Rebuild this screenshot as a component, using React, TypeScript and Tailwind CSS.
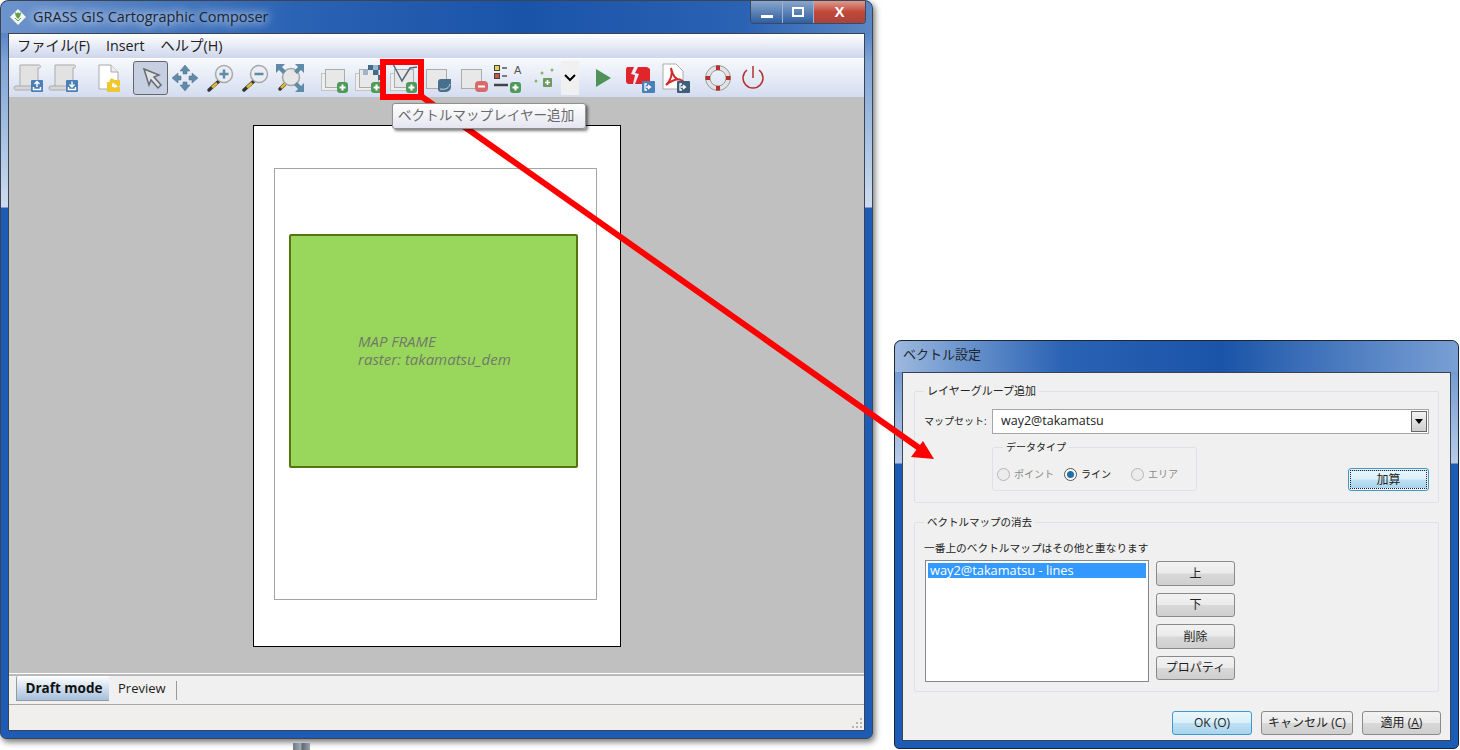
import React from 'react';

const jp = '[font-family:"Open_Sans","Noto_Sans_CJK_JP",sans-serif]';

const AddBadge = ({ x = 19, y = 20 }: { x?: number; y?: number }) => (
  <g>
    <rect x={x} y={y} width="11" height="11" rx="3" fill="#4f9a5b" />
    <path d={`M${x + 5.5} ${y + 2.5}v6M${x + 2.5} ${y + 5.5}h6`} stroke="#fff" strokeWidth="2" />
  </g>
);

const Layers = () => (
  <g>
    <rect x="3.5" y="11.5" width="19" height="17" fill="#eee" stroke="#c4c4c4" />
    <rect x="7.5" y="7.5" width="19" height="18" fill="#e8e8e8" stroke="#ababab" />
  </g>
);

const Scroll = ({ down }: { down?: boolean }) => (
  <svg viewBox="0 0 32 32" className="h-8 w-8">
    <path d="M7 3h19c2 0 2 3 0 3h-1v21H7z" fill="#e2e2e2" stroke="#ababab" />
    <path d="M1 26c0-2 2-2 3-2h15v4H3c-1 0-2-1-2-2z" fill="#d6d6d6" stroke="#ababab" />
    <rect x="18" y="18" width="12" height="12" rx="1" fill="#4b7fb8" />
    {down ? (
      <path d="M24 19.500v5M21.500 22.500l2.500 2.500 2.500-2.500M20.500 25v2.500h7V25" stroke="#fff" strokeWidth="1.400" fill="none" />
    ) : (
      <path d="M24 25v-5M21.500 22l2.500-2.500 2.500 2.500M20.500 25v2.500h7V25" stroke="#fff" strokeWidth="1.400" fill="none" />
    )}
  </svg>
);

const NewPage = () => (
  <svg viewBox="0 0 32 32" className="h-8 w-8">
    <path d="M6 3h12l7 7v17H6z" fill="#fff" stroke="#aaa" />
    <path d="M18 3v7h7" fill="#eee" stroke="#aaa" />
    <path d="M14 20h5v5h-5zM21 18h6v6h-6zM19 25h8v5H14v-5z" fill="#edc92f" />
    <circle cx="19" cy="19" r="2.500" fill="#edc92f" />
    <circle cx="22" cy="24" r="1.800" fill="#fff" />
  </svg>
);

const Pointer = () => (
  <svg viewBox="0 0 32 32" className="h-8 w-8">
    <path d="M9 7l15 6-5 2 7 8-3 3-7-8-2 5z" fill="#dfe3ea" stroke="#6a6a6a" strokeWidth="1.500" />
  </svg>
);

const Pan = () => (
  <svg viewBox="0 0 32 32" className="h-8 w-8" fill="#5f8aa8" stroke="#486f8c" strokeWidth="0.500">
    <path d="M16 3l5 6h-3v3h-4V9h-3z" />
    <path d="M16 29l5-6h-3v-3h-4v3h-3z" />
    <path d="M3 16l6-5v3h3v4H9v3z" />
    <path d="M29 16l-6-5v3h-3v4h3v3z" />
  </svg>
);

const Zoom = ({ plus }: { plus?: boolean }) => (
  <svg viewBox="0 0 32 32" className="h-8 w-8">
    <path d="M15 19L5 28" stroke="#333" strokeWidth="3.500" strokeLinecap="round" />
    <path d="M13 21L8 25.500" stroke="#e3b92c" strokeWidth="2.500" />
    <circle cx="20" cy="12" r="8.500" fill="#eaeef4" stroke="#a8a8a8" strokeWidth="1.500" />
    <path d={plus ? 'M20 7.500v9M15.500 12h9' : 'M15.500 12h9'} stroke="#5f8aa8" strokeWidth="2.500" />
  </svg>
);

const ZoomExtent = () => (
  <svg viewBox="0 0 32 32" className="h-8 w-8">
    <path d="M13 20L6 27" stroke="#333" strokeWidth="3.500" strokeLinecap="round" />
    <path d="M12 21L7 26" stroke="#e3b92c" strokeWidth="2.500" />
    <circle cx="17" cy="15" r="8.500" fill="#e6e6e6" stroke="#a5a5a5" strokeWidth="1.500" />
    <g fill="#5f8aa8">
      <path d="M2 2h9l-3 3 4 4-3 3-4-4-3 3z" />
      <path d="M30 2h-9l3 3-4 4 3 3 4-4 3 3z" />
      <path d="M30 30h-9l3-3-4-4 3-3 4 4 3-3z" />
    </g>
  </svg>
);

const AddMap = () => (
  <svg viewBox="0 0 32 32" className="h-8 w-8">
    <Layers />
    <AddBadge />
  </svg>
);

const AddRaster = () => (
  <svg viewBox="0 0 32 32" className="h-8 w-8">
    <Layers />
    <path d="M16 3h5v5h5V3h5v5h-5v5h5v5h-5v-5h-5V8h-5z" fill="#3f6b8c" />
    <path d="M21 3h5v5h-5zM11 8h5v5h-5z" fill="#9db5c8" />
    <AddBadge />
  </svg>
);

const AddVector = () => (
  <svg viewBox="0 0 32 32" className="h-8 w-8">
    <Layers />
    <path d="M6 2l9 17 8-13 7-1" fill="none" stroke="#50697d" strokeWidth="1.500" />
    <AddBadge />
  </svg>
);

const AddOverlay = () => (
  <svg viewBox="0 0 32 32" className="h-8 w-8">
    <rect x="3.500" y="7.500" width="20" height="19" fill="#e8e8e8" stroke="#ababab" />
    <path d="M15 20a3 3 0 013-3h10v8a5 5 0 01-5 5h-5a3 3 0 01-3-3z" fill="#46708c" />
    <path d="M17 27c6 1 9-1 10-5" stroke="#cfdce6" fill="none" />
  </svg>
);

const RemoveMap = () => (
  <svg viewBox="0 0 32 32" className="h-8 w-8">
    <rect x="3.500" y="7.500" width="20" height="19" fill="#e8e8e8" stroke="#ababab" />
    <rect x="17" y="19" width="13" height="11" rx="4" fill="#d96a6a" />
    <path d="M20 24.500h7" stroke="#fff" strokeWidth="2" />
  </svg>
);

const AddLegend = () => (
  <svg viewBox="0 0 32 32" className="h-8 w-8">
    <rect x="2.500" y="3.500" width="5" height="5" fill="#e5d54a" stroke="#444" />
    <rect x="2.500" y="11.500" width="5" height="5" fill="#c8554a" stroke="#444" />
    <path d="M10 6h5M10 14h5" stroke="#555" strokeWidth="1.500" />
    <path d="M2 23h14" stroke="#444" strokeWidth="2.500" />
    <text x="22" y="12" fontSize="11" fill="#555" fontFamily="Liberation Sans, sans-serif">A</text>
    <AddBadge x={18} y={20} />
  </svg>
);

const AddPoints = () => (
  <svg viewBox="0 0 32 32" className="h-8 w-8">
    <g fill="#8db36f">
      <circle cx="14" cy="11" r="1.500" />
      <circle cx="24" cy="8" r="1.500" />
      <circle cx="8" cy="19" r="1.500" />
    </g>
    <rect x="15" y="16" width="9" height="9" rx="1" fill="#6f9a62" />
    <path d="M19.500 18v5M17 20.500h5" stroke="#fff" strokeWidth="1.500" />
  </svg>
);

const Play = () => (
  <svg viewBox="0 0 32 32" className="h-8 w-8">
    <path d="M9 7l15 9-15 9z" fill="#4f9258" />
  </svg>
);

const ExportBadge = ({ color }: { color: string }) => (
  <g>
    <rect x="18" y="19" width="13" height="12" rx="1" fill={color} />
    <path d="M23 22h-2v6h2M24 23l2.500 2-2.500 2M22 25h4" stroke="#fff" strokeWidth="1.300" fill="none" />
  </g>
);

const ExportPs = () => (
  <svg viewBox="0 0 32 32" className="h-8 w-8">
    <path d="M3 5h7l-3 7 4 1-2 9H5a3 3 0 01-3-3V7zM14 5h9l3 2v15H11l4-10-4-1z" fill="#e0262b" />
    <ExportBadge color="#4b7fb8" />
  </svg>
);

const ExportPdf = () => (
  <svg viewBox="0 0 32 32" className="h-8 w-8">
    <path d="M4 2h13l7 7v18H4z" fill="#fff" stroke="#aaa" />
    <path d="M12 6c2 7 0 12-5 17 4-4 12-7 15-5-4 0-8-2-10-12z" fill="none" stroke="#d42a2a" strokeWidth="2" />
    <ExportBadge color="#3f5f78" />
  </svg>
);

const Help = () => (
  <svg viewBox="0 0 32 32" className="h-8 w-8">
    <circle cx="16" cy="16" r="10.500" fill="none" stroke="#e2e2e2" strokeWidth="4.500" />
    <circle cx="16" cy="16" r="12.500" fill="none" stroke="#9a9a9a" />
    <circle cx="16" cy="16" r="8" fill="none" stroke="#9a9a9a" />
    <path d="M14 3.500h4V8h-4zM14 24h4v4.500h-4zM3.500 14H8v4H3.500zM24 14h4.500v4H24z" fill="#b5302c" />
  </svg>
);

const Quit = () => (
  <svg viewBox="0 0 32 32" className="h-8 w-8">
    <path d="M10 8a10 10 0 1012 0" fill="none" stroke="#b5302c" strokeWidth="1.500" />
    <path d="M16 4v12" stroke="#b5302c" strokeWidth="1.500" />
  </svg>
);

const GrassLogo = () => (
  <svg viewBox="0 0 16 16" className="h-4 w-4">
    <path d="M8 0l8 8-8 8-8-8z" fill="#f4f6f2" />
    <path d="M8 3c1 2 2 1 3 0 0 3-1 5-3 7-2-2-3-4-3-7 1 1 2 2 3 0z" fill="#5f9e4a" />
    <path d="M8 12l-3-3M8 12l3-3" stroke="#5f9e4a" />
  </svg>
);

const WindowButtons = () => (
  <div className="flex h-[23px] w-[116px] overflow-hidden rounded-b-[4px] border border-t-0 border-[#3a4a66]">
    <div className="flex w-[32px] items-end justify-center border-r border-[#9fb4d2] bg-gradient-to-b from-[#8aa6cc] to-[#2f5f9f] pb-[5px]">
      <div className="h-[3px] w-[12px] bg-white" />
    </div>
    <div className="flex w-[31px] items-center justify-center border-r border-[#9fb4d2] bg-gradient-to-b from-[#8aa6cc] to-[#2f5f9f]">
      <div className="h-[10px] w-[12px] border-2 border-white" />
    </div>
    <div className="flex flex-1 items-center justify-center bg-gradient-to-b from-[#d99a8f] via-[#c2473a] to-[#a8443c] text-[15px] font-bold text-white [font-family:'Liberation_Sans',sans-serif]">
      X
    </div>
  </div>
);

const ToolItem = ({ className, children }: { className?: string; children: React.ReactNode }) => (
  <div className={`h-8 w-8 shrink-0 ${className ?? ''}`}>{children}</div>
);

const Toolbar = () => (
  <div className="flex h-[39px] items-center border-t border-white bg-gradient-to-b from-[#f6f8fc] to-[#d4ddf0] pl-1">
    <ToolItem><Scroll /></ToolItem>
    <ToolItem className="ml-[3px]"><Scroll down /></ToolItem>
    <ToolItem className="ml-[13px]"><NewPage /></ToolItem>
    <div className="ml-[8px] flex h-[34px] w-[35px] shrink-0 items-center justify-center rounded-[3px] border border-[#666] bg-[#c6d0e2]">
      <Pointer />
    </div>
    <ToolItem className="ml-px"><Pan /></ToolItem>
    <ToolItem className="ml-[3px]"><Zoom plus /></ToolItem>
    <ToolItem className="ml-[3px]"><Zoom /></ToolItem>
    <ToolItem className="ml-[3px]"><ZoomExtent /></ToolItem>
    <ToolItem className="ml-[12px]"><AddMap /></ToolItem>
    <ToolItem className="ml-[2px]"><AddRaster /></ToolItem>
    <ToolItem className="ml-[3px]"><AddVector /></ToolItem>
    <ToolItem className="ml-[4px]"><AddOverlay /></ToolItem>
    <ToolItem className="ml-[3px]"><RemoveMap /></ToolItem>
    <ToolItem className="ml-[2px]"><AddLegend /></ToolItem>
    <ToolItem className="ml-[4px]"><AddPoints /></ToolItem>
    <div className="ml-px flex h-[34px] w-[18px] shrink-0 items-center justify-center bg-[#f0f0f0]">
      <svg viewBox="0 0 12 8" className="h-[8px] w-[12px]">
        <path d="M1 1l5 5 5-5" fill="none" stroke="#000" strokeWidth="2" />
      </svg>
    </div>
    <ToolItem className="ml-[8px]"><Play /></ToolItem>
    <ToolItem className="ml-[5px]"><ExportPs /></ToolItem>
    <ToolItem className="ml-[3px]"><ExportPdf /></ToolItem>
    <ToolItem className="ml-[11px]"><Help /></ToolItem>
    <ToolItem className="ml-[3px]"><Quit /></ToolItem>
  </div>
);

const MainWindow = () => (
  <div className="flex h-[739px] w-[873px] shrink-0 flex-col rounded-t-[8px] rounded-b-[6px] border border-[#3c4452] bg-[linear-gradient(to_bottom,#2a62b4_0,#7fa4d6_60px,#cddcf0_206px,#1c5cb6_207px,#1c5cb6_100%)] px-[7px] pb-[7px] shadow-[2px_3px_6px_rgba(0,0,0,0.55)]">
    <div className="-mx-[7px] flex h-[32px] shrink-0 items-start justify-between rounded-t-[8px] bg-[linear-gradient(to_right,#6d94cc_0,#2a62b4_34%,#1a54a8_60%,#2a62b4_85%,#5b88c4_100%)] pl-[9px] pr-[6px]">
      <div className="flex items-center gap-[7px] pt-[8px]">
        <GrassLogo />
        <span className="text-[14.5px] leading-4 text-[#1c2430] [font-family:'Open_Sans',sans-serif] [text-shadow:0_0_8px_#dce8f8,0_0_12px_#dce8f8]">
          GRASS GIS Cartographic Composer
        </span>
      </div>
      <WindowButtons />
    </div>
    <div className="flex min-h-0 flex-1 flex-col border border-[#3c4452] bg-[#f0f0f0]">
      <div className={`flex h-[24px] shrink-0 items-center gap-[16px] bg-gradient-to-b from-white to-[#cdd6ec] pl-2 text-[14.3px] text-[#222] ${jp}`}>
        <span>ファイル(F)</span>
        <span>Insert</span>
        <span>ヘルプ(H)</span>
      </div>
      <Toolbar />
      <div className="min-h-0 flex-1 bg-[#c0c0c0] pl-[244px] pt-[28px]">
        <div className="h-[522px] w-[368px] border border-black bg-white pl-[20px] pt-[42px]">
          <div className="h-[432px] w-[323px] border border-[#a5a5a5] pl-[14px] pt-[65px]">
            <div className="h-[234px] w-[289px] rounded-[2px] border-2 border-[#55750f] bg-[#99d65c] pl-[67px] pt-[96px] text-[15px] italic leading-[18px] text-[#717a68] [font-family:'Open_Sans',sans-serif]">
              <div>MAP FRAME</div>
              <div>raster: takamatsu_dem</div>
            </div>
          </div>
        </div>
      </div>
      <div className="h-[3px] shrink-0 border-t border-white bg-[#b9b9b9]" />
      <div className="flex h-[29px] shrink-0 items-start border-b border-[#a8a8a8] bg-[#f0f0f0] pl-[7px] text-[13px] text-[#222] [font-family:'Open_Sans',sans-serif]">
        <div className="flex h-[25px] w-[93px] items-center justify-center rounded-tl-[2px] border-b border-l border-[#9a9a9a] bg-gradient-to-b from-white to-[#a5bfdc] pl-[2px] text-[13.5px] font-bold text-[#111]">
          Draft mode
        </div>
        <div className="flex h-[25px] items-center pl-[9px] pr-[10px]">Preview</div>
        <div className="mt-[5px] h-[19px] w-px bg-[#9a9a9a]" />
      </div>
      <div className="flex h-[25px] shrink-0 items-end justify-end bg-[#f1eeee] p-[2px]">
        <svg viewBox="0 0 10 10" className="h-[10px] w-[10px]" fill="#b5b5b5">
          <path d="M8 0h2v2H8zM8 4h2v2H8zM4 4h2v2H4zM8 8h2v2H8zM4 8h2v2H4zM0 8h2v2H0z" />
        </svg>
      </div>
    </div>
  </div>
);

const Radio = ({ on, label, className }: { on?: boolean; label: string; className?: string }) => (
  <div className={`flex items-center gap-[4px] ${className ?? ''}`}>
    <div className={`flex h-[13px] w-[13px] items-center justify-center rounded-full border ${on ? 'border-[#555] bg-white' : 'border-[#b5b5b5] bg-[#ececec]'}`}>
      {on && <div className="h-[7px] w-[7px] rounded-full bg-[#1f6fa8]" />}
    </div>
    <span className={on ? 'text-[#222]' : 'text-[#8a8a8a]'}>{label}</span>
  </div>
);

const Btn = ({ children, className }: { children: React.ReactNode; className?: string }) => (
  <div className={`flex items-center justify-center rounded-[3px] border border-[#8a8a8a] bg-[linear-gradient(to_bottom,#f2f2f2_0,#ebebeb_48%,#d8d8d8_52%,#cfcfcf_100%)] text-[#222] ${className ?? ''}`}>
    {children}
  </div>
);

const BlueBtn = ({ children, className }: { children: React.ReactNode; className?: string }) => (
  <div className={`flex items-center justify-center rounded-[3px] border border-[#3c9ad0] bg-[linear-gradient(to_bottom,#eaf6fc_0,#d9f0fa_48%,#bfe0f2_52%,#a8d4ec_100%)] text-[#222] ${className ?? ''}`}>
    {children}
  </div>
);

const VectorDialog = () => (
  <div className={`mt-[340px] ml-[21px] flex h-[409px] w-[565px] shrink-0 flex-col rounded-t-[7px] rounded-b-[5px] border border-[#1f2630] bg-[linear-gradient(to_bottom,#5d8ccb_0,#b8cbe8_122px,#1c5cb6_123px,#1c5cb6_100%)] px-[7px] pb-[7px] text-[12px] text-[#222] ${jp}`}>
    <div className="-mx-[7px] flex h-[31px] shrink-0 items-center rounded-t-[7px] bg-[linear-gradient(to_right,#9db9de_0,#6c95cd_12%,#2a62b4_30%,#1a54a8_58%,#4c7cc0_80%,#7aa0d4_100%)] pb-[3px] pl-[8px] text-[13px] text-[#20262e]">
      ベクトル設定
    </div>
    <div className="min-h-0 flex-1 border border-[#3c4452] bg-[#f0f0f0] px-[11px] pt-[10px]">
      <fieldset className="h-[120px] rounded-[2px] border border-[#dce2e8] px-[9px]">
        <legend className="px-[3px] text-[11px] leading-[16px]">レイヤーグループ追加</legend>
        <div className="mt-[10px] flex items-center">
          <span className="w-[68px] shrink-0 whitespace-nowrap text-[10px]">マップセット:</span>
          <div className="flex h-[25px] flex-1 items-center justify-between border border-[#a5a5a5] bg-white pl-[8px]">
            <span className="text-[12.5px]">way2@takamatsu</span>
            <div className="m-px flex h-[21px] w-[16px] items-center justify-center border border-[#666] bg-gradient-to-b from-[#f2f2f2] to-[#cfcfcf]">
              <div className="h-0 w-0 border-x-[4px] border-t-[5px] border-x-transparent border-t-black" />
            </div>
          </div>
        </div>
        <div className="flex items-end justify-between">
          <fieldset className="ml-[68px] mt-[5px] h-[52px] w-[205px] rounded-[3px] border border-[#dce2e8] px-[4px]">
            <legend className="ml-[6px] px-[3px] text-[10px] leading-[16px]">データタイプ</legend>
            <div className="mt-[12px] flex items-center text-[10px]">
              <Radio label="ポイント" className="w-[67px]" />
              <Radio on label="ライン" className="w-[67px]" />
              <Radio label="エリア" />
            </div>
          </fieldset>
          <div className="rounded-[3px] border border-[#3c9ad0] p-px">
            <div className="flex h-[19px] w-[77px] items-center justify-center border border-dotted border-[#222] bg-[linear-gradient(to_bottom,#eaf6fc_0,#d9f0fa_48%,#bfe0f2_52%,#a8d4ec_100%)]">
              加算
            </div>
          </div>
        </div>
      </fieldset>
      <fieldset className="mt-[11px] h-[178px] rounded-[2px] border border-[#dce2e8] px-[9px]">
        <legend className="px-[3px] text-[10.5px] leading-[16px]">ベクトルマップの消去</legend>
        <div className="mt-[10px] whitespace-nowrap text-[10.7px] leading-[16px]">一番上のベクトルマップはその他と重なります</div>
        <div className="ml-px mt-[4px] flex gap-[7px]">
          <div className="h-[122px] w-[224px] border border-[#828790] bg-white p-[2px]">
            <div className="flex h-[15px] items-center bg-[#3399ff] pl-[2px] text-[12.8px] leading-none text-white">
              way2@takamatsu - lines
            </div>
          </div>
          <div className="flex flex-col gap-[7px] pt-px">
            <Btn className="h-[25px] w-[79px]">上</Btn>
            <Btn className="h-[24px] w-[79px]">下</Btn>
            <Btn className="h-[25px] w-[79px]">削除</Btn>
            <Btn className="h-[24px] w-[79px]">プロパティ</Btn>
          </div>
        </div>
      </fieldset>
      <div className="-mr-[2px] mt-[19px] flex justify-end gap-[9px]">
        <BlueBtn className="h-[24px] w-[80px]">OK (O)</BlueBtn>
        <Btn className="h-[24px] w-[92px]">キャンセル (C)</Btn>
        <Btn className="h-[24px] w-[79px]">
          <span>
            適用 (<span className="underline">A</span>)
          </span>
        </Btn>
      </div>
    </div>
  </div>
);

export default function App() {
  return (
    <div className="relative flex h-[750px] w-[1460px] overflow-hidden bg-white">
      <MainWindow />
      <VectorDialog />

      {/* callout laid over both windows */}
      <div className="absolute left-[293px] top-[743px] h-[7px] w-[17px] bg-[linear-gradient(to_right,#6f7a88_0,#a0a8b4_45%,#5f6a78_55%,#9aa2ae_100%)]" />
      <svg viewBox="0 0 1460 750" className="pointer-events-none absolute inset-0 h-[750px] w-[1460px]">
        <line x1="418" y1="94" x2="922" y2="450" stroke="#ff0000" strokeWidth="6" />
        <polygon points="934,459 923,441 911,457" fill="#ff0000" />
      </svg>
      <div className="absolute left-[380px] top-[59px] h-[41px] w-[44px] border-[6px] border-[#ff0000]" />
      <div className={`absolute left-[392px] top-[103px] flex h-[26px] w-[194px] items-center rounded-[3px] border border-[#8f8f8f] bg-gradient-to-b from-white to-[#e4e5f0] pb-[2px] pl-[5px] text-[13.6px] text-[#6a6a6a] shadow-[2px_2px_3px_rgba(0,0,0,0.5)] ${jp}`}>
        ベクトルマップレイヤー追加
      </div>
    </div>
  );
}
